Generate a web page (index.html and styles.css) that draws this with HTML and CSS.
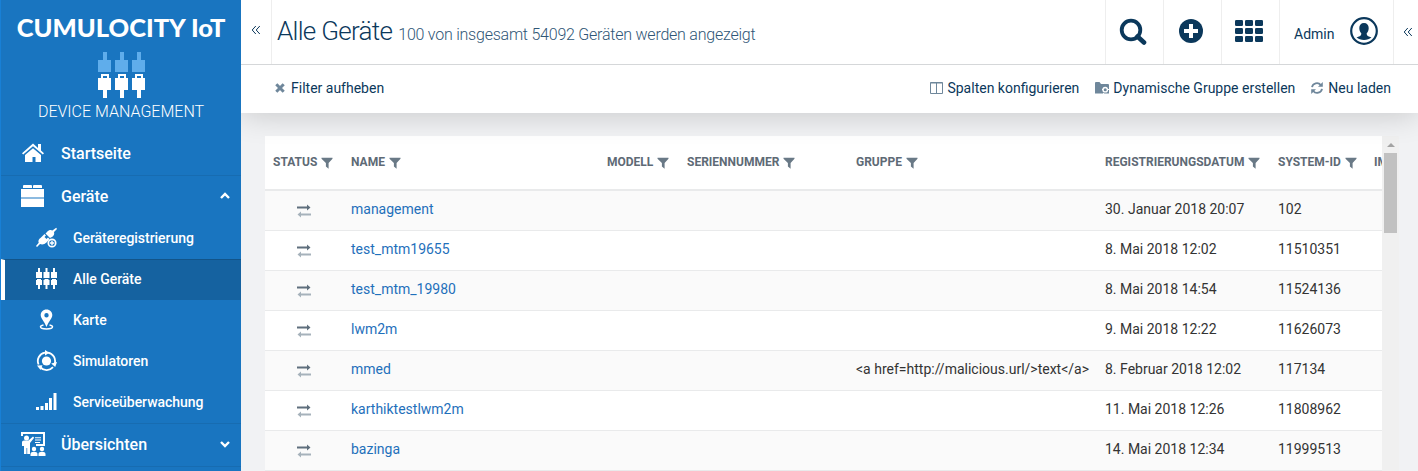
FILE: index.html
```html
<!DOCTYPE html>
<html lang="de">
<head>
<meta charset="utf-8">
<title>Alle Geräte - Cumulocity IoT</title>
<link rel="stylesheet" href="styles.css">
</head>
<body>
<svg class="defs" width="0" height="0">
  <symbol id="funnel" viewBox="0 0 12 12"><path d="M.5.8h11v.9L7.600 6v5.800L4.900 9.400V6L.5 1.700z"/></symbol>
  <symbol id="chev2" viewBox="0 0 10 10"><path d="M4.800 1 1.200 5l3.600 4M8.800 1 5.200 5l3.600 4" fill="none" stroke="currentColor" stroke-width="1"/></symbol>
  <symbol id="transfer" viewBox="0 0 14 14"><path d="M0 2.600h10V.5L13.500 3.500 10 6.500V4.400H0z" fill="#5f6f7d"/><path d="M14 9.600H4V7.500L.5 10.500l3.500 3v-2.100h10z" fill="#a6b2bb"/></symbol>
</svg>
<div class="app">
  <nav class="sidebar">
    <div class="brand">
      <div class="logo">CUMULOCITY IoT</div>
      <svg class="brand-icon" width="48" height="47" viewBox="0 0 48 47">
        <path fill="#5fadeb" d="M5 0h4v8h4v12H0V8h5zM22 0h4v8h4v12H17V8h5zM39 0h4v8h4v12H34V8h5z"/>
        <path fill="#fff" fill-rule="evenodd" d="M3 22h8v4h2v12H9v8H5v-8H0V26h3zM5 24v2h4v-2zM20 22h8v4h2v12h-4v8h-4v-8h-5V26h3zm2 2v2h4v-2zM37 22h8v4h2v12h-4v8h-4v-8h-5V26h3zm2 2v2h4v-2z"/>
      </svg>
      <div class="app-name">DEVICE MANAGEMENT</div>
    </div>
    <a class="item home">
      <svg width="24" height="24" viewBox="0 0 24 24" fill="#fff"><path d="M12 7.200 20 14v7h-5.500v-5h-3v5H4v-7z"/><path d="M12 2.500 1 12.200l1.200 1.300L12 5.300l9.800 8.200 1.200-1.300-3-2.600V3h-3v4z"/></svg>
      <span>Startseite</span>
    </a>
    <a class="item">
      <svg width="24" height="24" viewBox="0 0 24 24" fill="#fff"><path d="M2 2q0-1 1-1h7q1 0 1 1v2H2zM12 2q0-1 1-1h7q1 0 1 1v2h-9zM0 5h23v8.500H0zM0 14.500h23v8.500H0z"/></svg>
      <span>Geräte</span>
      <svg class="caret" width="10" height="8" viewBox="0 0 10 8"><path d="M1 6l4-4 4 4" fill="none" stroke="#fff" stroke-width="2.400"/></svg>
    </a>
    <a class="sub">
      <svg width="22" height="22" viewBox="0 0 22 22" fill="#fff"><path d="M20.200.8 21 2l-3 3c.6 2-.1 3.600-1.600 4.800L14 11l-4.500-4.500L11 5c2-2.200 4-2.400 5.400-1.400zM8.500 7l1.500 1.500L8.500 10l2 2 1.500-1.500 1.500 1.500-3 3.500C8.500 17.500 6 18 4 17l-3 3-1-1 2.700-3.200C1.800 13.500 3 12 4.500 11z"/><circle cx="16" cy="16" r="3.700" fill="#1975c0" stroke="#fff" stroke-width="1.700"/><path d="M15.300 13.800h1.400v1.500h1.500v1.400h-1.500v1.500h-1.400v-1.500h-1.500v-1.400h1.500z"/></svg>
      <span>Geräteregistrierung</span>
    </a>
    <a class="sub active">
      <svg width="22" height="22" viewBox="0 0 22 22" fill="#fff"><path d="M2 0h2v4h2v6H0V4h2zM9.500 0h2v4h2v6h-6V4h2zM17 0h2v4h2v6h-6V4h2zM1 11h4v1h1v5H4v4H2v-4H0v-5h1zM8.500 11h4v1h1v5h-2v4h-2v-4h-2v-5h1zM16 11h4v1h1v5h-2v4h-2v-4h-2v-5h1z"/></svg>
      <span>Alle Geräte</span>
    </a>
    <a class="sub">
      <svg width="22" height="22" viewBox="0 0 22 22" fill="#fff"><path fill-rule="evenodd" d="M10.500.5C7 .5 4.700 3 4.700 6c0 3.500 3.500 6 5.800 12 2.300-6 5.800-8.500 5.800-12C16.300 3 14 .5 10.500.5zm0 3.500a2.200 2.200 0 1 1 0 4.400 2.200 2.200 0 0 1 0-4.400z"/><path d="M7.500 16c-2 .4-3 .9-3 1.800 0 1.400 2.500 2.200 6 2.200s6-.8 6-2.200c0-.9-1-1.400-3-1.800" fill="none" stroke="#fff" stroke-width="1.500"/></svg>
      <span>Karte</span>
    </a>
    <a class="sub">
      <svg width="22" height="22" viewBox="0 0 22 22" fill="#fff"><circle cx="10.500" cy="11" r="4.600"/><path d="M2.600 14.500A8.500 8.500 0 0 1 9 2.600M12 2.600a8.500 8.500 0 0 1 6.700 10.900M17 17.200a8.500 8.500 0 0 1-12.500.3" fill="none" stroke="#fff" stroke-width="1.800"/><path d="M9 0l4.500 2.700L9 5.500zM21 12l-1.800 5-4-3.500zM1 15.500l5.500-.3-2 4.800z"/></svg>
      <span>Simulatoren</span>
    </a>
    <a class="sub">
      <svg width="22" height="22" viewBox="0 0 22 22" fill="#fff"><path d="M0 16h3v3H0zM4.500 15h3v4h-3zM9 12h3v7H9zM13 7h3v12h-3zM17.500 2h3v17h-3z"/></svg>
      <span>Serviceüberwachung</span>
    </a>
    <a class="item last">
      <svg width="26" height="26" viewBox="0 0 26 26" fill="#fff"><path d="M0 1h24v14h-9v-2h7V3H2v2H0z"/><circle cx="5.500" cy="7" r="2.500"/><path d="M1 11q0-1.500 2-1.500h4.500L12 5.500l1.200 1.200L9 12v11H6.200v-6h-.7v6H3v-8H1zM14 6.300h6v1h-6zM14 8.600h6v1h-6zM14 11h5v1h-5z"/><circle cx="13" cy="18" r="2.200"/><circle cx="21" cy="18" r="2.200"/><path d="M9.500 25v-2c0-1.500 1.500-2.300 3.500-2.300s3.500.8 3.500 2.300v2zM17.500 25v-2c0-1.500 1.500-2.300 3.500-2.300s3.500.8 3.500 2.300v2z"/></svg>
      <span>Übersichten</span>
      <svg class="caret" width="10" height="8" viewBox="0 0 10 8"><path d="M1 2l4 4 4-4" fill="none" stroke="#fff" stroke-width="2.400"/></svg>
    </a>
    <div class="nav-end"></div>
  </nav>
  <div class="main">
    <header class="top">
      <a class="collapse"><svg width="10" height="10"><use href="#chev2"/></svg></a>
      <h1><span class="title">Alle Geräte</span><small>100 von insgesamt 54092 Geräten werden angezeigt</small></h1>
      <a class="tool"><svg width="28" height="28" viewBox="0 0 28 28" fill="none" stroke="#0b385b"><circle cx="12" cy="12" r="9.300" stroke-width="3.800"/><path d="M18.500 18.500l6.500 6" stroke-width="4.600" stroke-linecap="round"/></svg></a>
      <a class="tool"><svg width="26" height="26" viewBox="0 0 26 26"><circle cx="13" cy="13" r="12" fill="#0b385b"/><path d="M11 6h4v5h5v4h-5v5h-4v-5H6v-4h5z" fill="#fff"/></svg></a>
      <a class="tool"><svg width="28" height="24" viewBox="0 0 28 24" fill="#0b385b"><rect y="1" width="8" height="6" rx="1.300"/><rect x="10" y="1" width="8" height="6" rx="1.300"/><rect x="20" y="1" width="8" height="6" rx="1.300"/><rect y="9" width="8" height="6" rx="1.300"/><rect x="10" y="9" width="8" height="6" rx="1.300"/><rect x="20" y="9" width="8" height="6" rx="1.300"/><rect y="17" width="8" height="6" rx="1.300"/><rect x="10" y="17" width="8" height="6" rx="1.300"/><rect x="20" y="17" width="8" height="6" rx="1.300"/></svg></a>
      <a class="user"><span>Admin</span><svg width="28" height="28" viewBox="0 0 28 28"><circle cx="14" cy="14" r="12.800" fill="none" stroke="#0b385b" stroke-width="2.200"/><path fill="#0b385b" d="M14 6c3 0 4.700 2 4.700 5 0 2-.7 4-2 5.300 0 2.200.8 3 4.800 4C19.500 22 17 23 14 23s-5.500-1-7.500-2.700c4-1 4.800-1.800 4.800-4C10 15 9.300 13 9.300 11c0-3 1.700-5 4.700-5z"/></svg></a>
      <a class="drawer"><svg width="10" height="10"><use href="#chev2"/></svg></a>
    </header>
    <div class="actions">
      <a class="clear"><svg width="10" height="10" viewBox="0 0 10 10"><path d="M1.300 1.300l7.400 7.400m0-7.400l-7.400 7.400" stroke="#6f879b" stroke-width="3"/></svg><span>Filter aufheben</span></a>
      <a class="columns"><svg width="13" height="12" viewBox="0 0 13 12"><path d="M.5.500h12v11H.500zM6.500.500v11M.500 1h12" fill="none" stroke="#6f879b"/></svg><span>Spalten konfigurieren</span></a>
      <a class="group"><svg width="14" height="12" viewBox="0 0 14 12"><path fill="#6f879b" d="M0 1q0-1 1-1h3.500L6 2h7q1 0 1 1v8.500H0z"/><circle cx="10.200" cy="7.700" r="2.200" fill="#6f879b" stroke="#fff" stroke-width="1.400"/><path d="M7 7.500h1M12.500 7.500H14M9 11l-.8 1" stroke="#fff"/></svg><span>Dynamische Gruppe erstellen</span></a>
      <a class="reload"><svg width="12" height="12" viewBox="0 0 12 12"><path d="M1 5.200A5 5 0 0 1 9.800 3M11 6.800A5 5 0 0 1 2.200 9" fill="none" stroke="#6f879b" stroke-width="1.800"/><path fill="#6f879b" d="M11.800 0v4.800H7zM.2 12V7.200H5z"/></svg><span>Neu laden</span></a>
    </div>
    <div class="content">
      <div class="panel">
        <table>
          <colgroup><col class="c1"><col class="c2"><col class="c3"><col class="c4"><col class="c5"><col class="c6"><col class="c7"><col class="c8"></colgroup>
          <thead><tr>
            <th><span>STATUS</span><svg><use href="#funnel"/></svg></th>
            <th><span>NAME</span><svg><use href="#funnel"/></svg></th>
            <th><span>MODELL</span><svg><use href="#funnel"/></svg></th>
            <th><span>SERIENNUMMER</span><svg><use href="#funnel"/></svg></th>
            <th><span>GRUPPE</span><svg><use href="#funnel"/></svg></th>
            <th><span>REGISTRIERUNGSDATUM</span><svg><use href="#funnel"/></svg></th>
            <th><span>SYSTEM-ID</span><svg><use href="#funnel"/></svg></th>
            <th><span>IMEI</span></th>
          </tr></thead>
          <tbody>
            <tr><td class="st"><svg><use href="#transfer"/></svg></td><td><a>management</a></td><td></td><td></td><td></td><td>30. Januar 2018 20:07</td><td>102</td><td></td></tr>
            <tr><td class="st"><svg><use href="#transfer"/></svg></td><td><a>test_mtm19655</a></td><td></td><td></td><td></td><td>8. Mai 2018 12:02</td><td>11510351</td><td></td></tr>
            <tr><td class="st"><svg><use href="#transfer"/></svg></td><td><a>test_mtm_19980</a></td><td></td><td></td><td></td><td>8. Mai 2018 14:54</td><td>11524136</td><td></td></tr>
            <tr><td class="st"><svg><use href="#transfer"/></svg></td><td><a>lwm2m</a></td><td></td><td></td><td></td><td>9. Mai 2018 12:22</td><td>11626073</td><td></td></tr>
            <tr><td class="st"><svg><use href="#transfer"/></svg></td><td><a>mmed</a></td><td></td><td></td><td>&lt;a href=http://malicious.url/&gt;text&lt;/a&gt;</td><td>8. Februar 2018 12:02</td><td>117134</td><td></td></tr>
            <tr><td class="st"><svg><use href="#transfer"/></svg></td><td><a>karthiktestlwm2m</a></td><td></td><td></td><td></td><td>11. Mai 2018 12:26</td><td>11808962</td><td></td></tr>
            <tr><td class="st"><svg><use href="#transfer"/></svg></td><td><a>bazinga</a></td><td></td><td></td><td></td><td>14. Mai 2018 12:34</td><td>11999513</td><td></td></tr>
          </tbody>
        </table>
      </div>
      <div class="scrollbar"><div class="arrow"></div><div class="thumb"></div></div>
    </div>
  </div>
</div>
</body>
</html>
```

FILE: styles.css
```css
* { box-sizing: border-box; }
body { margin: 0; height: 471px; overflow: hidden; font: 14px Roboto, sans-serif; color: #333; }
svg { display: block; flex: none; }
.defs { position: absolute; }
.app { display: flex; height: 471px; overflow: hidden; }

.sidebar { width: 241px; flex: none; background: #1975c0; border-left: 1px solid #1880d6; color: #fff; display: flex; flex-direction: column; }
.brand { height: 132px; flex: none; display: flex; flex-direction: column; align-items: center; }
.logo { font: 900 25.5px/30px Lato, sans-serif; margin-top: 12px; white-space: nowrap; }
.brand-icon { margin: 10px 0 0 2px; }
.app-name { font-weight: 300; font-size: 16px; line-height: 20px; margin-top: 3px; white-space: nowrap; }
.item { display: flex; align-items: center; height: 43px; flex: none; padding: 0 11px 2px 20px; font-size: 16px; font-weight: 500; border-top: 1px solid #176cb1; }
.item span { margin-left: 16px; }
.item .caret { margin-left: auto; }
.item.home { border-top: 0; padding-bottom: 0; }
.item.home svg { margin-bottom: 2px; }
.item.last span { margin-left: 14px; }
.sub { display: flex; align-items: center; height: 41px; flex: none; padding: 0 0 2px 35px; font-size: 14px; font-weight: 500; letter-spacing: -.04px; }
.sub span { margin-left: 15px; }
.active { background: #1562a0; border-left: 4px solid #fff; border-top: 1px solid #125489; padding-left: 31px; }
.nav-end { border-top: 1px solid #176cb1; }

.main { flex: 1; min-width: 0; display: flex; flex-direction: column; background: #f1f2f4; }
.top { height: 65px; flex: none; display: flex; background: #fff; border-bottom: 1px solid #d5d7d9; color: #0b385b; }
.collapse { width: 31px; border-right: 1px solid #eee; padding: 25px 0 0 10px; }
h1 { flex: 1; margin: 0; padding: 15px 0 0 5px; font-weight: 300; white-space: nowrap; line-height: 32px; }
.title { font-size: 26px; letter-spacing: -.7px; }
small { font-size: 16px; margin-left: 6px; color: #2f5676; letter-spacing: -.23px; }
.tool { width: 58px; border-left: 1px solid #eee; display: flex; justify-content: center; align-items: center; padding: 0 3px 3px 0; }
.tool:nth-of-type(2) { padding-bottom: 1px; }
.user { width: 114px; border-left: 1px solid #eee; display: flex; align-items: center; padding: 0 0 3px 14px; }
.user span { padding-top: 7px; width: 41px; }
.user svg { margin-left: 15px; }
.drawer { width: 25px; border-left: 1px solid #eee; padding: 27px 0 0 9px; }

.actions { height: 48px; flex: none; display: flex; align-items: center; padding: 0 27px 2px 34px; background: #fff; color: #0b385b; box-shadow: 0 0 32px rgba(0, 0, 0, .2); clip-path: inset(0 0 -40px 0); }
.actions a { display: flex; align-items: center; gap: 5px; white-space: nowrap; }
.actions .clear { gap: 6px; }
.actions .columns { margin-left: auto; gap: 4px; }
.actions .group { gap: 4px; }
.group, .reload { margin-left: 16px; }

.content { flex: 1; min-height: 0; display: flex; padding: 23px 19px 0 24px; }
.panel { width: 1117px; flex: none; overflow: hidden; background: #fff; }
table { table-layout: fixed; width: 1160px; border-collapse: separate; border-spacing: 0; }
.c1 { width: 78px; } .c2 { width: 256px; } .c3 { width: 80px; } .c4 { width: 169px; }
.c5 { width: 249px; } .c6 { width: 173px; } .c7 { width: 96px; } .c8 { width: 59px; }
th { height: 55px; padding: 0 0 1px 8px; border-bottom: 2px solid #e9eaeb; text-align: left; font-size: 12px; font-weight: 700; color: #5e6a75; white-space: nowrap; }
th svg { display: inline-block; width: 12px; height: 12px; margin-left: 4px; fill: #697986; vertical-align: -3px; }
td { height: 40px; padding: 0 0 4px 8px; border-bottom: 1px solid #e9eaeb; white-space: nowrap; }
td a { color: #1f70bb; }
tr:nth-child(odd) td { background: #fafafa; }
td.st { padding-bottom: 0; }
.st svg { width: 14px; height: 14px; margin-left: 24px; }
.scrollbar { width: 17px; background: #f0f0f0; display: flex; flex-direction: column; align-items: center; }
.arrow { border: 4px solid transparent; border-top: 0; border-bottom-color: #a3a3a3; margin-top: 7px; }
.thumb { width: 13px; height: 80px; margin-top: 6px; background: #c1c1c1; }
```
